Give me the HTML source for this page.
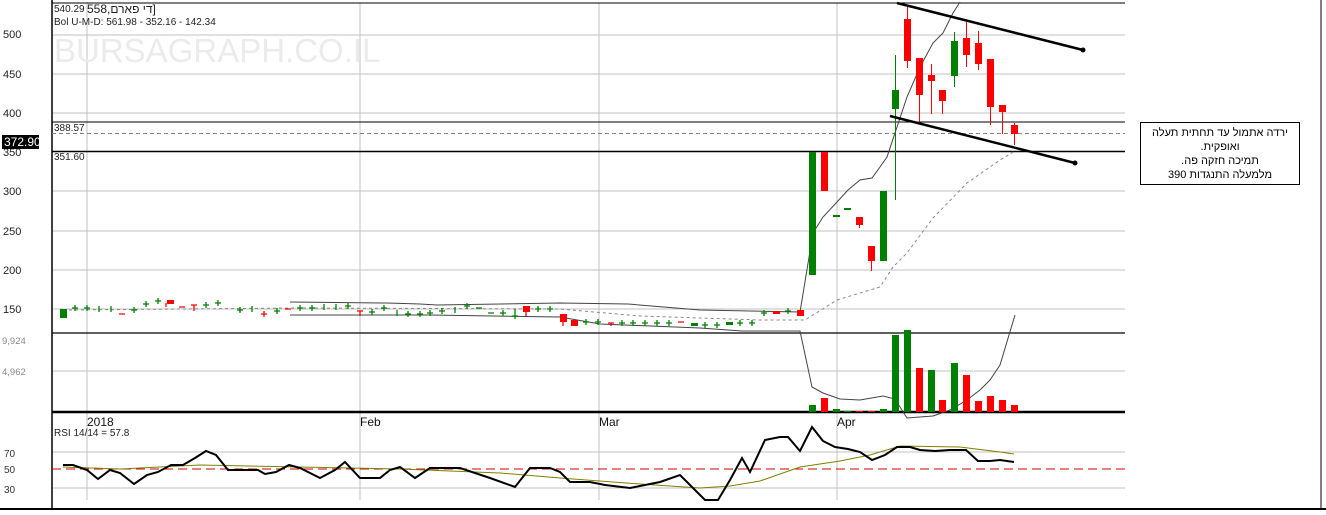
<!DOCTYPE html>
<html><head><meta charset="utf-8"><style>
body{margin:0;background:#fff;width:1326px;height:510px;overflow:hidden}
svg text{font-family:"Liberation Sans","Noto Sans CJK SC",sans-serif}
</style></head><body>
<svg width="1326" height="510" xmlns="http://www.w3.org/2000/svg">
<rect width="1326" height="510" fill="#fff"/>
<!-- grid -->
<g stroke="#c0c0c0" stroke-width="1">
<line x1="52" y1="35" x2="1125" y2="35"/><line x1="52" y1="74" x2="1125" y2="74"/>
<line x1="52" y1="113" x2="1125" y2="113"/><line x1="52" y1="191" x2="1125" y2="191"/>
<line x1="52" y1="231" x2="1125" y2="231"/><line x1="52" y1="270" x2="1125" y2="270"/>
<line x1="52" y1="309" x2="1125" y2="309"/><line x1="52" y1="371" x2="1125" y2="371"/>
<line x1="52" y1="452" x2="1125" y2="452"/><line x1="52" y1="488" x2="1125" y2="488"/>
<line x1="87" y1="3" x2="87" y2="500"/><line x1="360" y1="3" x2="360" y2="500"/>
<line x1="599" y1="3" x2="599" y2="500"/><line x1="837" y1="3" x2="837" y2="500"/>
</g>
<text x="54" y="62" font-size="33" fill="#ebebeb">BURSAGRAPH.CO.IL</text>
<!-- frame -->
<g stroke="#000">
<line x1="52" y1="0" x2="52" y2="510" stroke-width="1.5"/>
<line x1="52" y1="3" x2="1125" y2="3"/>
<line x1="1321" y1="0" x2="1321" y2="510"/>
<line x1="52" y1="122" x2="1125" y2="122"/>
<line x1="52" y1="151.5" x2="1125" y2="151.5" stroke-width="1.5"/>
<line x1="52" y1="333" x2="1125" y2="333" stroke-width="1.2"/>
<line x1="52" y1="412" x2="1125" y2="412" stroke-width="2.5"/>
<line x1="0" y1="509" x2="1326" y2="509" stroke-width="2"/>
</g>
<line x1="52" y1="133.5" x2="1125" y2="133.5" stroke="#808080" stroke-dasharray="4,3"/>
<line x1="52" y1="469" x2="1125" y2="469" stroke="#d00000" stroke-dasharray="9,5"/>
<!-- bollinger -->
<g fill="none" stroke="#444" stroke-width="1">
<polyline points="290,302 387,303 420,304 437,305 560,303 628,304 700,310 800,312 802,300 813,233 823,217 837,202 848,190 860,180 872,178 880,167 887,157 897,127 907,97 920,67 933,43 943,33 953,13 960,2"/>
<polyline points="290,315 430,315 560,317 600,324 700,328 742,331 800,331 812,387 823,393 840,399 860,400 883,396 895,399 907,418 933,416 950,410 967,400 980,390 990,380 1000,365 1015,315"/>
</g>
<polyline fill="none" stroke="#888" stroke-dasharray="3,3" points="63,310 300,308 560,309 640,316 760,320 805,320 837,300 870,290 880,287 893,267 907,253 933,218 967,183 1000,160 1015,151"/>
<!-- small candles -->
<g stroke="#008000" stroke-width="1.3" fill="#008000">
<rect x="60" y="309" width="7" height="9" stroke="none"/>
<path d="M72 308h6M75 305v6M84 308h6M87 305v6M99 306v6M111 306v6M131 310h6M134 307v6M143 304h6M146 301v6M155 301h6M158 298v6M203 305h6M206 302v6M215 303h6M218 300v6M237 310h6M240 307v6M252 306v6M274 311h6M277 308v6M297 308h6M300 305v6M309 308h6M312 305v6M324 304v6M336 304v6M345 306h6M348 303v6M369 312h6M372 309v6M381 308h6M384 305v6M397 310v6M405 314h6M408 311v6M417 314h6M420 311v6M427 313h6M430 310v6M439 311h6M442 308v6M455 307v6M464 306h6M467 303v6M476 308h6M488 313h6M500 313h6M503 310v6M512 316h6M515 309v10M535 309h6M538 306v6M547 309h6M550 306v6M583 322h6M586 319v6M595 322h6M598 319v6M619 323h6M622 320v6M630 323h6M633 320v6M642 323h6M645 320v6M654 323h6M657 320v6M666 323h6M669 320v6M702 325h6M705 322v6M714 325h6M717 322v6M737 323h6M740 320v6M749 323h6M752 320v6M761 313h6M764 310v6M785 311h6M788 308v6"/>
<rect x="691" y="323" width="7" height="3" stroke="none"/><rect x="726" y="322" width="7" height="3" stroke="none"/>
</g>
<g stroke="#f00" stroke-width="1.3" fill="#f00">
<path d="M119 314h6M179 307h6M191 305h6M194 305v6M261 314h6M264 311v6M285 309h6M357 311h6M360 311v5M608 323h6M611 323v3M678 322h6M166 303v4M563 322v4M526 312v4"/>
<rect x="167" y="300" width="7" height="4" stroke="none"/>
<rect x="523" y="306" width="7" height="6" stroke="none"/>
<rect x="560" y="314" width="7" height="8" stroke="none"/>
<rect x="571" y="320" width="7" height="6" stroke="none"/>
<rect x="773" y="311" width="7" height="3" stroke="none"/>
<rect x="797" y="310" width="7" height="6" stroke="none"/>
</g>
<!-- big candles -->
<g fill="#008000" stroke="#008000">
<rect x="809" y="152" width="7" height="123" stroke="none"/>
<rect x="833" y="215" width="7" height="2" stroke="none"/>
<rect x="844" y="208" width="7" height="2" stroke="none"/>
<rect x="880" y="191" width="7" height="70" stroke="none"/>
<line x1="895.5" y1="55" x2="895.5" y2="200"/><rect x="892" y="90" width="7" height="19" stroke="none"/>
<line x1="954.5" y1="32" x2="954.5" y2="87"/><rect x="951" y="41" width="7" height="35" stroke="none"/>
</g>
<g fill="#f00" stroke="#f00">
<rect x="821" y="152" width="7" height="39" stroke="none"/>
<line x1="859.5" y1="217" x2="859.5" y2="228"/><rect x="856" y="217" width="7" height="8" stroke="none"/>
<line x1="871.5" y1="246" x2="871.5" y2="271"/><rect x="868" y="246" width="7" height="15" stroke="none"/>
<line x1="907.5" y1="5" x2="907.5" y2="68"/><rect x="904" y="19" width="7" height="42" stroke="none"/>
<line x1="919.5" y1="58" x2="919.5" y2="122"/><rect x="916" y="58" width="7" height="37" stroke="none"/>
<line x1="931.5" y1="64" x2="931.5" y2="114"/><rect x="928" y="75" width="7" height="6" stroke="none"/>
<line x1="942.5" y1="90" x2="942.5" y2="114"/><rect x="939" y="90" width="7" height="11" stroke="none"/>
<line x1="966.5" y1="20" x2="966.5" y2="67"/><rect x="963" y="38" width="7" height="17" stroke="none"/>
<line x1="978.5" y1="31" x2="978.5" y2="70"/><rect x="975" y="43" width="7" height="21" stroke="none"/>
<line x1="990.5" y1="59" x2="990.5" y2="125"/><rect x="987" y="59" width="7" height="48" stroke="none"/>
<line x1="1002.5" y1="105" x2="1002.5" y2="134"/><rect x="999" y="105" width="7" height="7" stroke="none"/>
<line x1="1014.5" y1="123" x2="1014.5" y2="145"/><rect x="1011" y="125" width="7" height="9" stroke="none"/>
</g>
<!-- trend lines -->
<g stroke="#000" stroke-width="2.5">
<line x1="897" y1="3" x2="1083" y2="50"/><line x1="890" y1="116" x2="1075" y2="163"/>
</g>
<circle cx="1083" cy="50" r="2.5"/><circle cx="1075" cy="163" r="2.5"/>
<!-- volume -->
<g fill="#008000">
<rect x="809" y="405" width="7" height="7"/><rect x="833" y="409" width="7" height="3"/><rect x="844" y="411" width="7" height="1"/>
<rect x="880" y="409" width="7" height="3"/><rect x="892" y="335" width="7" height="77"/><rect x="904" y="330" width="7" height="82"/>
<rect x="928" y="370" width="7" height="42"/><rect x="951" y="363" width="7" height="49"/>
</g>
<g fill="#f00">
<rect x="821" y="398" width="7" height="14"/><rect x="856" y="411" width="7" height="1"/><rect x="868" y="411" width="7" height="1"/>
<rect x="916" y="368" width="7" height="44"/><rect x="939" y="400" width="7" height="12"/><rect x="963" y="375" width="7" height="37"/>
<rect x="975" y="401" width="7" height="11"/><rect x="987" y="396" width="7" height="16"/><rect x="999" y="400" width="7" height="12"/><rect x="1011" y="405" width="7" height="7"/>
</g>
<!-- RSI -->
<polyline fill="none" stroke="#808000" stroke-width="1" points="63,467 120,469 200,465 300,467 400,469 500,473 560,478 640,484 700,488 730,486 760,481 800,467 840,461 870,455 900,446 960,447 1000,452 1014,454"/>
<polyline fill="none" stroke="#000" stroke-width="2" points="63,465 73,465 87,470 98,479 110,470 120,473 134,484 147,475 158,472 171,465 183,465 195,458 206,451 216,455 228,470 258,470 265,474 276,472 289,465 300,468 320,478 335,470 345,462 360,478 380,478 390,470 400,467 415,478 430,468 460,468 490,478 515,487 530,468 550,468 560,472 570,482 590,482 605,485 630,488 660,482 680,475 695,490 705,500 718,500 730,480 742,458 750,472 765,440 780,437 788,437 800,451 812,427 823,441 835,447 848,449 860,452 872,460 885,455 897,447 910,447 920,450 935,451 950,450 966,450 978,461 990,461 1000,460 1014,462"/>
<!-- labels -->
<g font-size="11" fill="#222">
<text x="3" y="38">500</text><text x="3" y="78">450</text><text x="3" y="117">400</text>
<text x="3" y="156">350</text><text x="3" y="195">300</text><text x="3" y="235">250</text>
<text x="3" y="274">200</text><text x="3" y="313">150</text>
</g>
<rect x="2" y="135" width="37" height="14" fill="#000"/>
<text x="4" y="146" font-size="12" fill="#fff">372.90</text>
<g font-size="9.5" fill="#888"><text x="2" y="344">9,924</text><text x="2" y="375">4,962</text></g>
<g font-size="10" fill="#333"><text x="4" y="457">70</text><text x="4" y="473">50</text><text x="4" y="493">30</text></g>
<g font-size="10" fill="#222">
<text x="54" y="131">388.57</text><text x="54" y="160">351.60</text>
<text x="54" y="12">540.29</text><text x="87" y="13" font-size="12">558,די פארם]</text>
<text x="54" y="25">Bol U-M-D: 561.98 - 352.16 - 142.34</text>
<text x="54" y="436">RSI 14/14 = 57.8</text>
</g>
<g font-size="12" fill="#111"><text x="87" y="426">2018</text><text x="360" y="426">Feb</text><text x="599" y="426">Mar</text><text x="837" y="426">Apr</text></g>
<!-- annotation -->
<rect x="1140.5" y="122.5" width="159" height="62" fill="#fff" stroke="#000"/>
<g font-size="11" fill="#000" text-anchor="middle" direction="rtl">
<text x="1220" y="136">ירדה אתמול עד תחתית תעלה</text>
<text x="1220" y="150">ואופקית.</text>
<text x="1220" y="164">תמיכה חזקה פה.</text>
<text x="1220" y="178">מלמעלה התנגדות 390</text>
</g>
</svg>
</body></html>
